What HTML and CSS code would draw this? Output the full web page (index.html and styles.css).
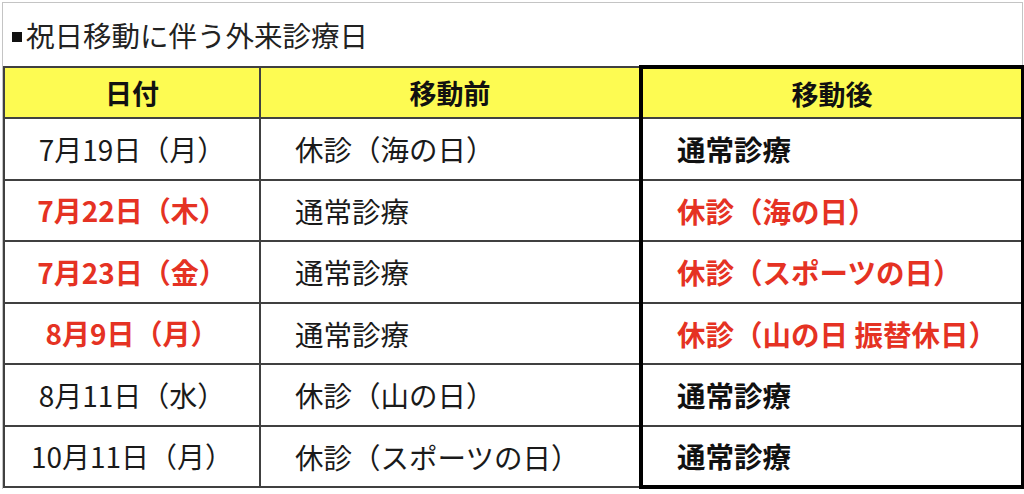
FILE: index.html
```html
<!DOCTYPE html>
<html lang="ja">
<head>
<meta charset="utf-8">
<link rel="stylesheet" href="styles.css">
</head>
<body>
<div class="sheet">
  <div class="title"><span class="sq"></span>祝日移動に伴う外来診療日</div>
  <table class="sched">
    <colgroup>
      <col class="c1"><col class="c2"><col class="c3">
    </colgroup>
    <thead>
      <tr>
        <th>日付</th>
        <th>移動前</th>
        <th class="after">移動後</th>
      </tr>
    </thead>
    <tbody>
      <tr>
        <td class="date">7月19日（月）</td>
        <td class="before">休診（海の日）</td>
        <td class="after">通常診療</td>
      </tr>
      <tr class="red">
        <td class="date">7月22日（木）</td>
        <td class="before">通常診療</td>
        <td class="after">休診（海の日）</td>
      </tr>
      <tr class="red">
        <td class="date">7月23日（金）</td>
        <td class="before">通常診療</td>
        <td class="after">休診（スポーツの日）</td>
      </tr>
      <tr class="red">
        <td class="date">8月9日（月）</td>
        <td class="before">通常診療</td>
        <td class="after">休診（山の日 振替休日）</td>
      </tr>
      <tr>
        <td class="date">8月11日（水）</td>
        <td class="before">休診（山の日）</td>
        <td class="after">通常診療</td>
      </tr>
      <tr class="lastrow">
        <td class="date">10月11日（月）</td>
        <td class="before">休診（スポーツの日）</td>
        <td class="after last">通常診療</td>
      </tr>
    </tbody>
  </table>
</div>
</body>
</html>
```

FILE: styles.css
```css
html, body {
  margin: 0;
  padding: 0;
  background: #ffffff;
}
body {
  font-family: "Noto Sans CJK JP", "Noto Sans", sans-serif;
  color: #1a1a1a;
}
.sheet {
  margin: 2px 0 0 2px;
  width: 1019px;
  border: 1px solid #c4c4c4;
  border-bottom: none;
}
.title {
  height: 62px;
  display: flex;
  align-items: center;
  font-size: 28.5px;
  padding-left: 9px;
  color: #222;
}
.sq {
  display: inline-block;
  width: 10px;
  height: 10px;
  background: #111;
  margin: 6px 4px 0 0;
}
.sched {
  border-collapse: collapse;
  width: 1019px;
  table-layout: fixed;
}
.c1 { width: 256px; }
.c2 { width: 381px; }
.c3 { width: 382px; }
.sched th, .sched td {
  border: 2px solid #404040;
  padding: 0;
}
.sched th {
  height: 48px;
  background: #fdfb52;
  font-size: 27px;
  font-weight: 700;
  text-align: center;
  color: #111;
}
.sched td {
  height: 59.5px;
  font-size: 28.5px;
}
.sched tr.lastrow td {
  height: 58px;
}
.sched td.date {
  text-align: center;
  font-size: 28px;
}
.sched td.before {
  padding-left: 34px;
}
.sched td.after {
  padding-left: 34px;
  font-weight: 700;
  color: #111;
}
.sched .after {
  border-left: 4px solid #000;
  border-right: 4px solid #000;
}
.sched th.after {
  border-top: 4px solid #000;
}
.sched td.last {
  border-bottom: 4px solid #000;
}
.sched tr.red .date,
.sched tr.red td.after {
  color: #e53223;
  font-weight: 700;
}
```
